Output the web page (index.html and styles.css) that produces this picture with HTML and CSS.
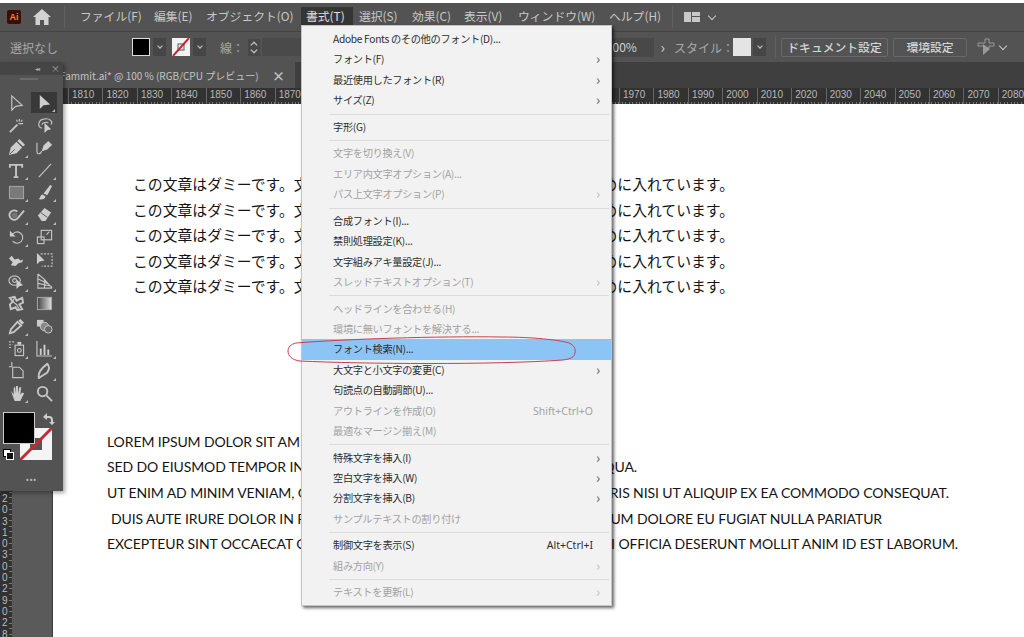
FILE: index.html
```html
<!DOCTYPE html>
<html lang="ja">
<head>
    <meta charset="UTF-8">
    <meta name="viewport" content="width=device-width, initial-scale=1.0">
    <title>Illustrator</title>
    <link rel="stylesheet" href="styles.css">
</head>
<body>
    <header class="menubar">
        <div class="app-logo">Ai</div>
        <svg class="home-icon" viewBox="0 0 18 16"><path d="M9 0 0 8h2.500v8h4.500v-5h4v5h4.500V8H18z"/></svg>
        <div class="bar-sep"></div>
        <nav class="menu-items">
            <span class="m-file">ファイル(F)</span>
            <span class="m-edit">編集(E)</span>
            <span class="m-object">オブジェクト(O)</span>
            <span class="m-type active">書式(T)</span>
            <span class="m-select">選択(S)</span>
            <span class="m-effect">効果(C)</span>
            <span class="m-view">表示(V)</span>
            <span class="m-window">ウィンドウ(W)</span>
            <span class="m-help">ヘルプ(H)</span>
        </nav>
        <div class="bar-sep"></div>
        <svg class="layout-icon" viewBox="0 0 16 10"><path d="M0 0h7v10H0zM8 0h8v4H8zM8 5h8v5H8z"/></svg>
        <span class="chev"></span>
    </header>

    <div class="optionbar">
        <div class="opt-left">
            <span class="no-select">選択なし</span>
            <span class="swatch fill-swatch"></span>
            <span class="chev-box"><span class="chev"></span></span>
            <svg class="swatch-svg" viewBox="0 0 18 18"><rect width="18" height="18" fill="#f2f2f2"/><rect x="6" y="6" width="6" height="6" fill="none" stroke="#555"/><path d="M1 18 17 0" stroke="#c9252d" stroke-width="2"/></svg>
            <span class="chev-box"><span class="chev"></span></span>
            <span class="stroke-label">線：</span>
            <svg class="spinner" viewBox="0 0 10 16"><path d="M2 6l3-3 3 3M2 10l3 3 3-3" fill="none" stroke="#bbb" stroke-width="1.300"/></svg>
            <span class="stroke-input"></span>
        </div>
        <div class="opt-right">
            <span class="opacity-box">00%</span>
            <span class="next-arrow">›</span>
            <span class="style-label">スタイル：</span>
            <span class="swatch style-swatch"></span>
            <span class="chev-box"><span class="chev"></span></span>
            <span class="bar-sep short"></span>
            <button class="opt-btn doc-btn">ドキュメント設定</button>
            <button class="opt-btn pref-btn">環境設定</button>
            <svg class="arrange-icon" viewBox="0 0 18 18"><path d="M1 5h7V1h4v4h5v3h-5v2H8V8H1z" fill="none" stroke="#999"/><path d="M6 6l7 5-7 6z" fill="#999"/></svg>
            <span class="chev"></span>
        </div>
    </div>

    <div class="tabrow">
        <div class="doc-tab">
            <span class="doc-title">Fammit.ai* @ 100 % (RGB/CPU プレビュー)</span>
            <span class="doc-close">×</span>
        </div>
    </div>

    <div class="ruler">
        <span>1810</span><span>1820</span><span>1830</span><span>1840</span><span>1850</span><span>1860</span><span>1870</span><span>1880</span><span>1890</span><span>1900</span><span>1910</span><span>1920</span><span>1930</span><span>1940</span><span>1950</span><span>1960</span><span>1970</span><span>1980</span><span>1990</span><span>2000</span><span>2010</span><span>2020</span><span>2030</span><span>2040</span><span>2050</span><span>2060</span><span>2070</span><span>2080</span>
    </div>

    <div class="workspace">
        <aside class="gutter">
            <div class="v-ruler">
                <span>2</span><span>0</span><span>3</span><span>1</span><span>0</span><span>3</span><span>0</span><span>0</span><span>2</span><span>9</span><span>0</span><span>2</span><span>8</span>
            </div>
        </aside>
        <main class="canvas">
            <!-- only the parts of each line that the dropdown leaves visible -->
            <div class="jp-text">
                <p><span class="left">この文章はダミーです。文</span><span class="right">めに入れています。</span></p>
                <p><span class="left">この文章はダミーです。文</span><span class="right">めに入れています。</span></p>
                <p><span class="left">この文章はダミーです。文</span><span class="right">めに入れています。</span></p>
                <p><span class="left">この文章はダミーです。文</span><span class="right">めに入れています。</span></p>
                <p><span class="left">この文章はダミーです。文</span><span class="right">めに入れています。</span></p>
            </div>
            <div class="lorem-text">
                <p><span class="left">LOREM IPSUM DOLOR SIT AM</span></p>
                <p><span class="left">SED DO EIUSMOD TEMPOR IN</span><span class="right r-short">QUA.</span></p>
                <p><span class="left">UT ENIM AD MINIM VENIAM, Q</span><span class="right r-long">RIS NISI UT ALIQUIP EX EA COMMODO CONSEQUAT.</span></p>
                <p class="indent"><span class="left">DUIS AUTE IRURE DOLOR IN R</span><span class="right r-mid">UM DOLORE EU FUGIAT NULLA PARIATUR</span></p>
                <p><span class="left">EXCEPTEUR SINT OCCAECAT C</span><span class="right r-last">I OFFICIA DESERUNT MOLLIT ANIM ID EST LABORUM.</span></p>
            </div>
        </main>
    </div>

    <!-- tools panel floats over the canvas -->
    <aside class="tools">
        <div class="tools-head"><span class="collapse">◂◂</span><span class="panel-x">×</span></div>
        <div class="grip"></div>
        <div class="tool-grid">
            <div class="tool"><svg viewBox="0 0 18 18"><path class="ln" d="M4 1v15l4-4 7-1z"/></svg></div>
            <div class="tool on more"><svg viewBox="0 0 18 18"><path class="fl" d="M4 1v15l4-4 7-1z"/></svg></div>

            <div class="tool"><svg viewBox="0 0 18 18"><path class="ln wide" d="M2 16 10 8"/><path class="ln" d="M12 2v3M9 3l1 2M15 3l-1 2M11 7h5"/></svg></div>
            <div class="tool"><svg viewBox="0 0 18 18"><path class="ln" d="M6 12C1 10 2 3 9 2c6-1 9 3 7 6"/><path class="ln" d="M6 8c1-2 5-3 7-2"/><path class="fl" d="M9 6v11l3-3 4-1z"/></svg></div>

            <div class="tool more"><svg viewBox="0 0 18 18"><path class="fl" d="M1 17l2-8 6-6 6 6-6 6z"/><path class="fl" d="M10 2l2-2 6 6-2 2z"/><path class="dk" d="M2 16l5-5"/></svg></div>
            <div class="tool"><svg viewBox="0 0 18 18"><path class="fl" d="M6 13l2-6 5-5 4 4-5 5z"/><path class="ln" d="M6 13c-1 3-5 4-5 0V4"/></svg></div>

            <div class="tool more"><svg viewBox="0 0 18 18"><path class="ln wide" d="M2 6V3h13v3M8.500 3v13M6 16h5"/></svg></div>
            <div class="tool more"><svg viewBox="0 0 18 18"><path class="ln" d="M3 16 16 2"/></svg></div>

            <div class="tool more"><svg viewBox="0 0 18 18"><rect x="1.500" y="2.500" width="15" height="13" fill="#7a7a7a" stroke="#aaa"/></svg></div>
            <div class="tool more"><svg viewBox="0 0 18 18"><path class="fl" d="M8 10l7-9 2 1-5 10z"/><path class="fl" d="M2 16c3 0 2-5 5-5l3 2c0 3-4 4-8 3z"/></svg></div>

            <div class="tool more"><svg viewBox="0 0 18 18"><path class="ln wide" d="M10 6a5 5 0 1 0 1 6L17 5"/><circle cx="7" cy="10" r="3" fill="#777"/></svg></div>
            <div class="tool more"><svg viewBox="0 0 18 18"><path class="fl" d="M2 10l7-8 7 5-6 9H6z"/><path class="dk" d="M5 7l7 5"/></svg></div>

            <div class="tool more"><svg viewBox="0 0 18 18"><path class="ln" d="M4 8a6 6 0 1 1 1 6"/><path class="fl" d="M2 3v6h6z"/></svg></div>
            <div class="tool"><svg viewBox="0 0 18 18"><rect class="ln" x="1.500" y="9.500" width="7" height="7"/><rect class="ln" x="5.500" y="2.500" width="11" height="10"/><path class="ln" d="M11 7l3-3"/></svg></div>

            <div class="tool more"><svg viewBox="0 0 18 18"><path class="fl" d="M1 8l3-3 3 4 4-1 2 2 3-1-1 3-4 1-3 3-5-1 2-3z"/></svg></div>
            <div class="tool"><svg viewBox="0 0 18 18"><path class="ln dash" d="M5 3h12v13H6"/><path class="fl" d="M1 2v12l3-3 5-1z"/></svg></div>

            <div class="tool more"><svg viewBox="0 0 18 18"><ellipse class="ln" cx="7" cy="8" rx="6" ry="5"/><circle class="ln" cx="7" cy="8" r="2"/><path class="fl" d="M9 7v10l3-3 4-1z"/></svg></div>
            <div class="tool more"><svg viewBox="0 0 18 18"><path class="ln" d="M2 1v15h15M2 1l7 6v9M2 6l10 5M2 11l15 3M9 7l8 9"/></svg></div>

            <div class="tool"><svg viewBox="0 0 18 18"><path class="ln wide" d="M2 3l5-1 2 4 6-3 1 5-4 2 3 5-5 1-2-3-5 2-1-5 3-3z"/><path class="ln" d="M7 2 5 7l4 3 3 5"/></svg></div>
            <div class="tool"><svg viewBox="0 0 18 18"><defs><linearGradient id="grad"><stop offset="0" stop-color="#444"/><stop offset="1" stop-color="#e0e0e0"/></linearGradient></defs><rect x="1.500" y="2.500" width="15" height="13" fill="url(#grad)" stroke="#aaa"/></svg></div>

            <div class="tool more"><svg viewBox="0 0 18 18"><path class="ln wide" d="M2 16l1-4 7-8 4 4-8 7z"/><path class="fl" d="M11 3l2-2 4 4-2 2z"/></svg></div>
            <div class="tool"><svg viewBox="0 0 18 18"><rect x="1" y="2" width="7" height="7" fill="#ccc"/><circle cx="9" cy="9" r="4.500" fill="#888" stroke="#ccc"/><circle cx="13" cy="12" r="4" fill="#666" stroke="#ccc"/></svg></div>

            <div class="tool more"><svg viewBox="0 0 18 18"><path class="ln dash" d="M1 2h6M1 5h4M1 8h3"/><rect class="ln" x="7.500" y="5.500" width="9" height="11"/><circle class="ln" cx="12" cy="11" r="2"/><path class="fl" d="M10 2h4v3h-4z"/></svg></div>
            <div class="tool more"><svg viewBox="0 0 18 18"><path class="ln" d="M1 1v16h16"/><path class="fl" d="M4 9h2v7H4zM8 5h2v11H8zM12 10h2v6h-2z"/></svg></div>

            <div class="tool"><svg viewBox="0 0 18 18"><path class="ln" d="M4 0v5M1 5h3M5 5.500h7l4 4v7H5z"/></svg></div>
            <div class="tool more"><svg viewBox="0 0 18 18"><path class="ln wide" d="M3 17c-1-5 2-10 9-15 3 3 2 9-3 11z"/></svg></div>

            <div class="tool more"><svg viewBox="0 0 18 18"><path class="fl" d="M3 6l3 4V3l1.500-1 1 7V1h2l.5 8 1-6.500h2L13 10l2-2 2 1-4 8H7z"/></svg></div>
            <div class="tool"><svg viewBox="0 0 18 18"><circle class="ln wide" cx="7" cy="7" r="5"/><path class="ln wide" d="M11 11l6 6"/></svg></div>
        </div>

        <div class="color-boxes">
            <div class="fill-box"></div>
            <svg class="stroke-box" viewBox="0 0 32 32"><path d="M0 0h32v32H0z" fill="#f4f4f4"/><rect x="10" y="10" width="12" height="12" fill="#555"/><path d="M0 32 32 0" stroke="#c62a31" stroke-width="3"/></svg>
            <svg class="swap-icon" viewBox="0 0 12 12"><path d="M1 4h5a3 3 0 0 1 3 3v3" fill="none" stroke="#ccc" stroke-width="2"/><path d="M4 0v7L0 4zM6 9h6l-3 3z" fill="#ccc"/></svg>
            <svg class="default-icon" viewBox="0 0 11 11"><rect x=".500" y=".500" width="7" height="7" fill="#fff" stroke="#000"/><rect x="3.500" y="3.500" width="7" height="7" fill="#111" stroke="#fff"/></svg>
        </div>
        <div class="more-dots">•••</div>
    </aside>

    <!-- 書式 dropdown -->
    <div class="type-menu">
        <div class="mi">Adobe Fonts のその他のフォント(D)...</div>
        <div class="mi">フォント(F)<i>›</i></div>
        <div class="mi">最近使用したフォント(R)<i>›</i></div>
        <div class="mi">サイズ(Z)<i>›</i></div>
        <hr>
        <div class="mi">字形(G)</div>
        <hr>
        <div class="mi off">文字を切り換え(V)</div>
        <div class="mi off">エリア内文字オプション(A)...</div>
        <div class="mi off">パス上文字オプション(P)<i>›</i></div>
        <hr>
        <div class="mi">合成フォント(I)...</div>
        <div class="mi">禁則処理設定(K)...</div>
        <div class="mi">文字組みアキ量設定(J)...</div>
        <div class="mi off">スレッドテキストオプション(T)<i>›</i></div>
        <hr>
        <div class="mi off">ヘッドラインを合わせる(H)</div>
        <div class="mi off">環境に無いフォントを解決する...</div>
        <div class="mi hover">フォント検索(N)...</div>
        <div class="mi">大文字と小文字の変更(C)<i>›</i></div>
        <div class="mi">句読点の自動調節(U)...</div>
        <div class="mi off">アウトラインを作成(O)<b>Shift+Ctrl+O</b></div>
        <div class="mi off">最適なマージン揃え(M)</div>
        <hr>
        <div class="mi">特殊文字を挿入(I)<i>›</i></div>
        <div class="mi">空白文字を挿入(W)<i>›</i></div>
        <div class="mi">分割文字を挿入(B)<i>›</i></div>
        <div class="mi off">サンプルテキストの割り付け</div>
        <hr>
        <div class="mi">制御文字を表示(S)<b>Alt+Ctrl+I</b></div>
        <div class="mi off">組み方向(Y)<i>›</i></div>
        <hr>
        <div class="mi off">テキストを更新(L)<i>›</i></div>
    </div>

    <!-- hand drawn red mark around the highlighted item -->
    <svg class="red-mark" viewBox="0 0 292 30"><path d="M9 7C60 3 150 0 215 1c30 0 58 3 67 6 5 2 7 6 6 10-1 4-4 6-12 7-70 5-200 4-263 1C5 24 1 20 1 15 1 11 4 8 9 7z"/></svg>
</body>
</html>
```

FILE: styles.css
```css
body {
    margin: 0;
    width: 1024px;
    height: 637px;
    overflow: hidden;
    position: relative;
    background-color: #fff;
    font-family: "Noto Sans CJK JP", "Noto Sans", sans-serif;
    color: #222;
}

/* top menu bar */
.menubar {
    margin-top: 3px;
    height: 28px;
    background-color: #535353;
    display: flex;
    align-items: center;
    color: #c8c8c8;
    font-size: 11.8px;
}

.app-logo {
    width: 14px;
    height: 14px;
    margin-left: 7px;
    background-color: #3a0d05;
    border-radius: 2px;
    color: #f08a1d;
    font: bold 9px/14px "Liberation Sans", sans-serif;
    text-align: center;
}

.home-icon {
    width: 18px;
    height: 16px;
    margin-left: 12px;
    fill: #d2d2d2;
}

.bar-sep {
    width: 1px;
    height: 22px;
    background-color: #606060;
    margin-left: 13px;
}

.bar-sep.short {
    margin: 0 5px 0 9px;
}

.menu-items {
    display: flex;
    flex: 0 0 589px;
    margin: 0 0 2px 15px;
}

.menu-items + .bar-sep {
    margin-left: 3px;
}

.menu-items span {
    white-space: nowrap;
    line-height: 17px;
}

.m-file { width: 74px; }
.m-edit { width: 52px; }
.m-object { width: 95px; }
.m-select { width: 53px; }
.m-effect { width: 52px; }
.m-view { width: 54px; }
.m-window { width: 91px; }
.m-help { width: 60px; }

.m-type.active {
    width: 52px;
    margin-right: 6px;
    padding: 0 0 1px 5px;
    box-sizing: border-box;
    background-color: #353535;
    color: #e0e0e0;
}

.layout-icon {
    width: 16px;
    height: 10px;
    margin-left: 11px;
    fill: #c8c8c8;
}

.layout-icon + .chev {
    margin-left: 9px;
}

.chev {
    display: inline-block;
    width: 5px;
    height: 5px;
    margin-top: -3px;
    border-right: 1.5px solid #c8c8c8;
    border-bottom: 1.5px solid #c8c8c8;
    transform: rotate(45deg);
}

/* option bar */
.optionbar {
    height: 30px;
    background-color: #535353;
    border-top: 1px solid #444;
    display: flex;
    justify-content: space-between;
    align-items: center;
    font-size: 12px;
    color: #a8a8a8;
}

.opt-left,
.opt-right {
    display: flex;
    align-items: center;
}

.opt-right {
    padding-right: 18px;
}

.no-select {
    margin-left: 10px;
    width: 122px;
}

.swatch {
    display: block;
    width: 16px;
    height: 16px;
    border: 1px solid #ddd;
}

.fill-swatch {
    background-color: #000;
}

.chev-box {
    display: flex;
    align-items: center;
    justify-content: center;
    width: 13px;
    height: 18px;
    margin-left: 3px;
    background-color: #464646;
}

.chev-box .chev {
    width: 3px;
    height: 3px;
}

.swatch-svg {
    width: 18px;
    height: 18px;
    margin-left: 6px;
}

.stroke-label {
    margin-left: 14px;
    width: 28px;
}

.spinner {
    width: 12px;
    height: 17px;
    background-color: #484848;
}

.stroke-input {
    display: block;
    width: 40px;
    height: 18px;
    margin-left: 2px;
    background-color: #4a4a4a;
}

.opacity-box {
    background-color: #484848;
    height: 19px;
    line-height: 18px;
    width: 42px;
    color: #cfcfcf;
}

.next-arrow {
    font-size: 15px;
    line-height: 18px;
    margin: 0 9px 0 6px;
    color: #d0d0d0;
}

.style-label {
    width: 59px;
    white-space: nowrap;
}

.style-swatch {
    background-color: #e4e4e4;
    border-color: #e4e4e4;
}

.style-swatch + .chev-box {
    margin-left: 2px;
}

.opt-btn {
    height: 19px;
    padding: 0;
    background-color: #535353;
    border: 1px solid #696969;
    border-radius: 2px;
    color: #d4d4d4;
    font: 500 11.8px/16px "Noto Sans CJK JP", sans-serif;
}

.doc-btn { width: 107px; }
.pref-btn { width: 74px; margin-left: 5px; }

.arrange-icon {
    width: 18px;
    height: 18px;
    margin: 0 5px 0 10px;
}

/* document tab row */
.tabrow {
    height: 26px;
    background-color: #3f3f3f;
    padding-left: 60px;
}

.doc-tab {
    width: 235px;
    height: 26px;
    background-color: #535353;
    display: flex;
    justify-content: space-between;
    align-items: center;
    color: #c4c4c4;
    font: 10px "Noto Sans CJK JP", sans-serif;
    white-space: nowrap;
}

.doc-close {
    margin-right: 10px;
    font-weight: bold;
    font-size: 13px;
}

/* horizontal ruler */
.ruler {
    height: 16px;
    box-sizing: border-box;
    padding-left: 68px;
    background-color: #323232;
    background-image: repeating-linear-gradient(90deg, #777 0 1px, transparent 1px 3.44px);
    background-size: 100% 2px;
    background-repeat: no-repeat;
    background-position: 68px bottom;
    display: flex;
    overflow: hidden;
}

.ruler span {
    flex: 0 0 34.45px;
    box-sizing: border-box;
    border-left: 1px solid #666;
    padding-left: 3px;
    color: #b8b8b8;
    font: 10px/14px "Liberation Sans", sans-serif;
}

/* canvas and left gutter */
.workspace {
    display: flex;
    height: 533px;
}

.gutter {
    width: 52px;
    flex-shrink: 0;
    background-color: #5a5a5a;
    border-right: 1px solid #3b3b3b;
    box-sizing: content-box;
}

.v-ruler {
    width: 12px;
    height: 533px;
    box-sizing: border-box;
    padding: 389px 0 0 2px;
    background-color: #323232;
    background-image: repeating-linear-gradient(180deg, #777 0 1px, transparent 1px 5.7px);
    background-size: 3px 100%;
    background-repeat: no-repeat;
    background-position: right top;
    display: flex;
    flex-direction: column;
    align-items: flex-start;
    color: #bdbdbd;
    font: 10px/11.300px "Liberation Sans", sans-serif;
}

.canvas {
    flex: 1;
    background-color: #fff;
    overflow: hidden;
    white-space: nowrap;
    color: #141414;
}

.canvas p {
    margin: 0;
    display: flex;
}

.canvas .left {
    overflow: hidden;
}

.canvas .right {
    display: flex;
    justify-content: flex-end;
    overflow: hidden;
    margin-left: 311px;
}

.jp-text {
    margin: 67px 0 0 80px;
    font-size: 14.830px;
    line-height: 25.500px;
}

.jp-text .left {
    width: 168px;
}

.jp-text .right {
    width: 122px;
}

.lorem-text {
    margin-top: 130px;
    margin-left: 54px;
    font: 14px/25.700px Lato, sans-serif;
    letter-spacing: -0.1px;
}

.lorem-text .left {
    width: 194px;
}

.lorem-text .indent {
    margin-left: 4px;
}

.lorem-text .indent .left {
    width: 190px;
}

.r-short { width: 25px; }
.r-long { width: 337px; }
.r-mid { width: 270px; }
.r-last { width: 346px; }

/* tools panel */
.tools {
    position: absolute;
    left: 0;
    top: 62px;
    width: 63px;
    height: 429px;
    background-color: #535353;
    box-shadow: 2px 2px 4px rgba(0, 0, 0, 0.35);
}

.tools-head {
    height: 13px;
    background-color: #454545;
    color: #aaa;
    display: flex;
    justify-content: flex-end;
    align-items: center;
    gap: 12px;
    padding-right: 3px;
    font-size: 9px;
    line-height: 13px;
}

.collapse {
    font-size: 6px;
    letter-spacing: -1px;
}

.grip {
    width: 18px;
    height: 2px;
    margin: 3px 0 0 20px;
    background-color: #6a6a6a;
}

.tool-grid {
    display: grid;
    grid-template-columns: 28px 28px;
    grid-auto-rows: 22.300px;
    margin: 12px 0 0 2px;
}

.tool {
    position: relative;
    display: flex;
    align-items: center;
    justify-content: center;
}

.tool svg {
    width: 17px;
    height: 17px;
}

.tool.on {
    background-color: #383838;
    margin: 0 1px 1px 1px;
}

.tool.more::after {
    content: "";
    position: absolute;
    right: 2px;
    bottom: 1px;
    border-left: 3px solid transparent;
    border-bottom: 3px solid #bbb;
}

.ln {
    fill: none;
    stroke: #c6c6c6;
    stroke-width: 1.200;
}

.ln.wide {
    stroke-width: 2;
}

.ln.dash {
    stroke-dasharray: 2 1.500;
}

.fl {
    fill: #cdcdcd;
}

.dk {
    fill: none;
    stroke: #555;
}

.color-boxes {
    position: relative;
    height: 52px;
    margin-top: 8px;
}

.fill-box {
    position: absolute;
    left: 3px;
    top: 0;
    width: 30px;
    height: 30px;
    background-color: #000;
    border: 1.500px solid #ccc;
    z-index: 1;
}

.stroke-box {
    position: absolute;
    left: 20px;
    top: 16px;
    width: 32px;
    height: 32px;
}

.swap-icon {
    position: absolute;
    left: 43px;
    top: 1px;
    width: 12px;
    height: 12px;
}

.default-icon {
    position: absolute;
    left: 3px;
    top: 37px;
    width: 11px;
    height: 11px;
}

.more-dots {
    text-align: center;
    margin-top: 9px;
    color: #bbb;
    font-size: 8px;
    letter-spacing: 1px;
}

/* dropdown */
.type-menu {
    position: absolute;
    left: 301px;
    top: 25px;
    width: 309px;
    padding: 3px 0 2px;
    background-color: #f2f2f2;
    border: 1px solid #c4c4c4;
    box-shadow: 2px 2px 3px rgba(0, 0, 0, 0.6);
}

.mi {
    position: relative;
    height: 20.380px;
    line-height: 20px;
    padding-left: 31px;
    font-size: 10.200px;
    letter-spacing: -0.3px;
    color: #2e2e2e;
    white-space: nowrap;
}

.mi.off {
    color: #a2a2a2;
}

.mi.hover {
    background-color: #8cc4f6;
}

.mi i {
    position: absolute;
    right: 11px;
    top: 0;
    font-style: normal;
    font-size: 14px;
    line-height: 18px;
    color: #555;
}

.mi.off i {
    color: #bbb;
}

.mi b {
    position: absolute;
    right: 18px;
    font-weight: 400;
    font-size: 10.500px;
    letter-spacing: 0;
    font-family: "Noto Sans", sans-serif;
}

.type-menu hr {
    margin: 3px 2px 2.300px 27px;
    height: 1px;
    border: 0;
    background-color: #dcdcdc;
}

.red-mark {
    position: absolute;
    left: 287px;
    top: 336px;
    width: 292px;
    height: 30px;
}

.red-mark path {
    fill: none;
    stroke: #c8404f;
    stroke-width: 1;
}
```
